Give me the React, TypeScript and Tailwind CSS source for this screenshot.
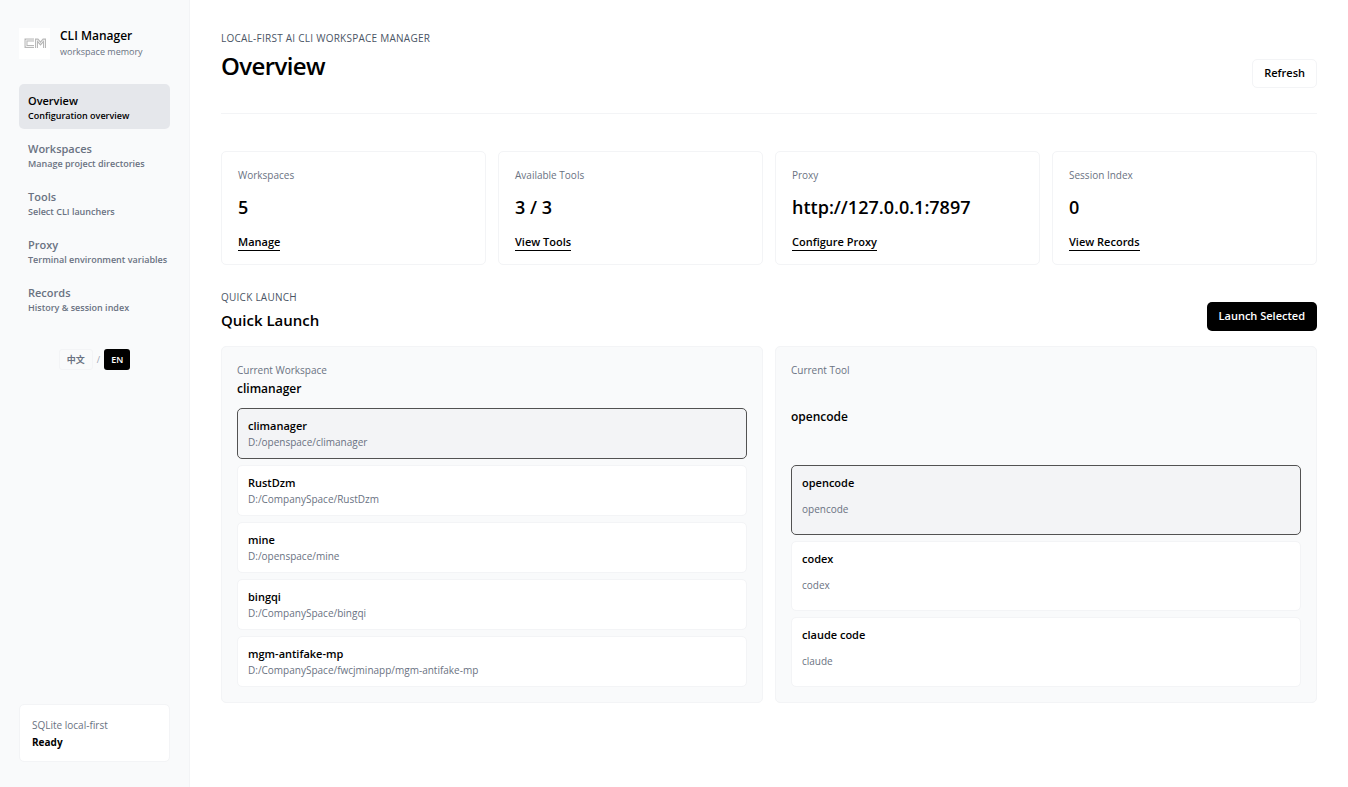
import React from 'react';
import clsx from 'clsx';

const NAV_ITEMS = [
  { id: 'overview', title: 'Overview', hint: 'Configuration overview' },
  { id: 'workspaces', title: 'Workspaces', hint: 'Manage project directories' },
  { id: 'tools', title: 'Tools', hint: 'Select CLI launchers' },
  { id: 'proxy', title: 'Proxy', hint: 'Terminal environment variables' },
  { id: 'records', title: 'Records', hint: 'History & session index' },
];

const STATS = [
  { label: 'Workspaces', value: '5', action: 'Manage' },
  { label: 'Available Tools', value: '3 / 3', action: 'View Tools' },
  { label: 'Proxy', value: 'http://127.0.0.1:7897', action: 'Configure Proxy' },
  { label: 'Session Index', value: '0', action: 'View Records' },
];

const WORKSPACES = [
  { name: 'climanager', path: 'D:/openspace/climanager' },
  { name: 'RustDzm', path: 'D:/CompanySpace/RustDzm' },
  { name: 'mine', path: 'D:/openspace/mine' },
  { name: 'bingqi', path: 'D:/CompanySpace/bingqi' },
  { name: 'mgm-antifake-mp', path: 'D:/CompanySpace/fwcjminapp/mgm-antifake-mp' },
];

const TOOLS = [
  { name: 'opencode', command: 'opencode' },
  { name: 'codex', command: 'codex' },
  { name: 'claude code', command: 'claude' },
];

// Outlined monogram: a wide grey stroke with a thinner light one on top
const MONOGRAM = 'M15 12H7V18.5H15 M17.5 20V12H18.5L21.5 15.5L24.5 12H25.5V20';

const Logo: React.FC = () => (
  <svg viewBox="0 0 31 31" className="size-[31px] shrink-0 bg-white" fill="none" aria-hidden="true">
    <path d={MONOGRAM} stroke="#b8b8b8" strokeWidth="3" />
    <path d={MONOGRAM} stroke="#f4f4f4" strokeWidth="1" />
  </svg>
);

const Sidebar: React.FC = () => (
  <aside className="flex w-[190px] shrink-0 flex-col border-r border-gray-100 bg-gray-50 px-[19px] pt-[26px] pb-[25px]">
    <div className="flex items-center gap-[10px]">
      <Logo />
      <div className="pt-px">
        <div className="text-[12px] leading-[17px] font-semibold text-black">CLI Manager</div>
        <div className="text-[9px] leading-4 text-gray-500">workspace memory</div>
      </div>
    </div>

    <nav className="mt-6 flex flex-col gap-[3px]">
      {NAV_ITEMS.map((item) => {
        const active = item.id === 'overview';
        return (
          <button
            key={item.id}
            type="button"
            aria-current={active ? 'page' : undefined}
            className={clsx(
              'flex h-[45px] flex-col justify-center rounded-[5px] px-[9px] pt-[2px] text-left font-semibold whitespace-nowrap',
              active ? 'bg-gray-200 text-black' : 'text-gray-500'
            )}
          >
            <span className="text-[11px] leading-4">{item.title}</span>
            <span className="text-[9px] leading-[14px]">{item.hint}</span>
          </button>
        );
      })}
    </nav>

    <div className="mt-7 flex items-center justify-center gap-1 text-[9px] text-gray-400">
      <button type="button" className="h-[21px] rounded-[3px] border border-gray-100 px-[7px] font-semibold text-gray-500">
        中文
      </button>
      <span>/</span>
      <button type="button" className="h-[21px] rounded-[3px] bg-black px-[7px] font-semibold text-white">
        EN
      </button>
    </div>

    <div className="mt-auto rounded-[5px] border border-gray-100 bg-white px-3 pt-3 pb-[10px]">
      <div className="text-[10px] leading-[17px] text-gray-500">SQLite local-first</div>
      <div className="text-[10px] leading-[17px] font-bold text-black">Ready</div>
    </div>
  </aside>
);

interface OptionProps {
  title: string;
  detail: string;
  selected: boolean;
  roomy?: boolean;
}

const Option: React.FC<OptionProps> = ({ title, detail, selected, roomy }) => (
  <button
    type="button"
    aria-pressed={selected}
    className={clsx(
      'flex flex-col rounded-[5px] border px-[10px] text-left',
      roomy ? 'h-[70px] gap-[10px] pt-[9px]' : 'h-[51px] justify-center',
      selected ? 'border-neutral-600 bg-gray-100' : 'border-gray-100 bg-white'
    )}
  >
    <span className="text-[11px] leading-4 font-semibold text-black">{title}</span>
    <span className="text-[10px] leading-4 text-gray-500">{detail}</span>
  </button>
);

const App: React.FC = () => (
  <div className="flex min-h-screen bg-white font-['Open_Sans','Noto_Sans_CJK_SC',sans-serif] text-black">
    <Sidebar />

    <main className="min-w-0 flex-1 px-[31px] pt-[30px] pb-8">
      <header className="flex items-end justify-between border-b border-gray-100 pb-[25px]">
        <div className="pb-[6px]">
          <p className="text-[10px] leading-4 tracking-wide text-gray-600">
            LOCAL-FIRST AI CLI WORKSPACE MANAGER
          </p>
          <h1 className="mt-1 text-[24px] leading-8 font-semibold tracking-tight">Overview</h1>
        </div>
        <button type="button" className="h-[29px] rounded-[5px] border border-gray-100 px-[11px] text-[11px] font-semibold">
          Refresh
        </button>
      </header>

      <section className="mt-[37px] grid grid-cols-4 gap-3">
        {STATS.map((stat) => (
          <div key={stat.label} className="flex h-[114px] flex-col items-start rounded-[5px] border border-gray-100 px-4 pt-[15px]">
            <span className="text-[10px] leading-4 text-gray-500">{stat.label}</span>
            <strong className="mt-3 text-[18px] leading-6 font-semibold">{stat.value}</strong>
            <button type="button" className="mt-[15px] border-b border-black text-[11px] leading-4 font-semibold">
              {stat.action}
            </button>
          </div>
        ))}
      </section>

      <section className="mt-6">
        <div className="flex items-end justify-between">
          <div>
            <p className="text-[10px] leading-4 tracking-wide text-gray-600">QUICK LAUNCH</p>
            <h2 className="mt-1 text-[15px] leading-[22px] font-semibold">Quick Launch</h2>
          </div>
          <button type="button" className="h-[29px] rounded-[5px] bg-black px-3 text-[11px] font-semibold text-white">
            Launch Selected
          </button>
        </div>

        <div className="mt-[15px] grid grid-cols-2 gap-3">
          <div className="rounded-[5px] border border-gray-100 bg-gray-50 p-[15px]">
            <div className="text-[10px] leading-4 text-gray-500">Current Workspace</div>
            <div className="mt-px text-[12px] leading-5 font-semibold">climanager</div>
            <div className="mt-[9px] flex flex-col gap-[6px]">
              {WORKSPACES.map((workspace, index) => (
                <Option key={workspace.name} title={workspace.name} detail={workspace.path} selected={index === 0} />
              ))}
            </div>
          </div>

          <div className="flex flex-col rounded-[5px] border border-gray-100 bg-gray-50 p-[15px]">
            <div className="text-[10px] leading-4 text-gray-500">Current Tool</div>
            <div className="mt-[29px] text-[12px] leading-5 font-semibold">opencode</div>
            <div className="mt-auto flex flex-col gap-[6px]">
              {TOOLS.map((tool, index) => (
                <Option key={tool.name} title={tool.name} detail={tool.command} selected={index === 0} roomy />
              ))}
            </div>
          </div>
        </div>
      </section>
    </main>
  </div>
);

export default App;
